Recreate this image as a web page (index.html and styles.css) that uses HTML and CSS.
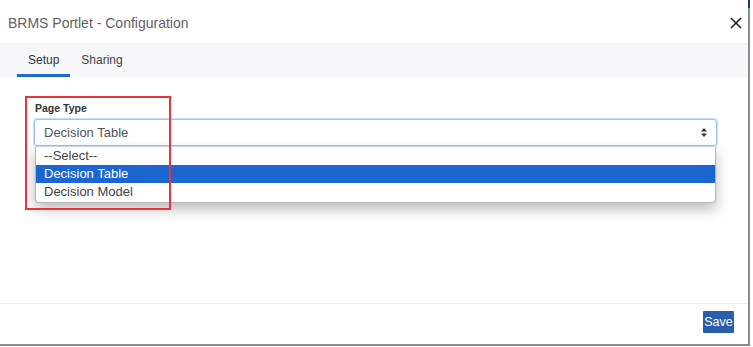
FILE: index.html
```html
<!DOCTYPE html>
<html>
<head>
<meta charset="utf-8">
<link rel="stylesheet" href="styles.css">
</head>
<body>
<div class="frame">
  <div class="accent"></div>
  <div class="header">
    <div class="title">BRMS Portlet - Configuration</div>
    <svg class="close" width="12" height="12" viewBox="0 0 12 12"><path d="M1 1L11 11M11 1L1 11" stroke="#222" stroke-width="1.6" fill="none"/></svg>
  </div>
  <div class="tabs">
    <div class="tab active">Setup</div>
    <div class="tab">Sharing</div>
  </div>
  <div class="body">
    <div class="field">
      <div class="label">Page Type</div>
      <div class="select">
        <span>Decision Table</span>
        <svg class="arrows" width="6" height="9" viewBox="0 0 6 9"><path d="M3 0L6 3.5H0Z M3 9L6 5.5H0Z" fill="#333"/></svg>
        <div class="menu">
          <div class="opt">--Select--</div>
          <div class="opt sel">Decision Table</div>
          <div class="opt">Decision Model</div>
        </div>
      </div>
      <div class="annot"></div>
    </div>
  </div>
  <div class="footer">
    <button class="save">Save</button>
  </div>
</div>
</body>
</html>
```

FILE: styles.css
```css
html, body { margin: 0; padding: 0; background: #fff; }
body { font-family: "Liberation Sans", Arial, sans-serif; width: 753px; height: 347px; overflow: hidden; }
.frame {
  position: relative;
  width: 750px; height: 346px;
  box-sizing: border-box;
  border-right: 2px solid #8c8c8c;
  border-bottom: 2px solid #8c8c8c;
  display: flex; flex-direction: column;
  background: #fff;
}
.accent { position: absolute; right: -2px; top: 0; width: 2px; height: 8px; background: #1f3a66; }
.header {
  height: 44px; flex: none; box-sizing: border-box;
  border-bottom: 1px solid #eceef0;
  display: flex; align-items: center; justify-content: space-between;
  padding: 2px 6px 0 8px;
}
.title { font-size: 14px; color: #5f5f5f; }
.close { display: block; }
.tabs {
  height: 33px; flex: none;
  background: #f6f7f9;
  display: flex; padding-left: 17px;
}
.tab {
  font-size: 12px; color: #444;
  padding: 2px 11px 0 11px;
  line-height: 28px;
  border-bottom: 3px solid transparent;
}
.tab.active { border-bottom-color: #1f6bd6; color: #333; }
.body { flex: 1; padding: 25px 31px 0 34px; }
.field { position: relative; }
.label { font-size: 10.5px; font-weight: bold; color: #333; line-height: 12px; margin-left: 1px; margin-bottom: 5px; }
.select {
  position: relative;
  height: 27px; box-sizing: border-box;
  border: 1px solid #9cc4f0;
  border-radius: 3px;
  box-shadow: 0 0 0 1px rgba(140, 185, 240, 0.45);
  display: flex; align-items: center; justify-content: space-between;
  padding: 0 9px 0 9px;
  font-size: 13px; color: #555;
}
.arrows { display: block; }
.menu {
  position: absolute; left: 0; right: 0; top: 27px;
  background: #fff;
  border: 1px solid #b4b4b4;
  border-top: none;
  border-radius: 0 0 4px 4px;
  box-shadow: 0 6px 14px rgba(0,0,0,0.28);
  padding-bottom: 1px;
}
.opt { height: 18px; line-height: 18px; padding-left: 8px; font-size: 13px; color: #444; }
.opt.sel { background: #1b66d1; color: #fff; }
.annot {
  position: absolute; left: -9px; top: -6px;
  width: 146px; height: 114px; box-sizing: border-box;
  border: 2px solid #e8333a;
  pointer-events: none;
}
.footer {
  height: 41px; flex: none; box-sizing: border-box;
  border-top: 1px solid #eceef0;
  display: flex; justify-content: flex-end; align-items: flex-start;
  padding: 7px 14px 0 0;
}
.save {
  font-family: "Liberation Sans", Arial, sans-serif;
  background: #2a5eab; color: #fff;
  border: none; border-radius: 1px;
  width: 31px; height: 22px; padding: 0;
  font-size: 12.5px;
}
```
